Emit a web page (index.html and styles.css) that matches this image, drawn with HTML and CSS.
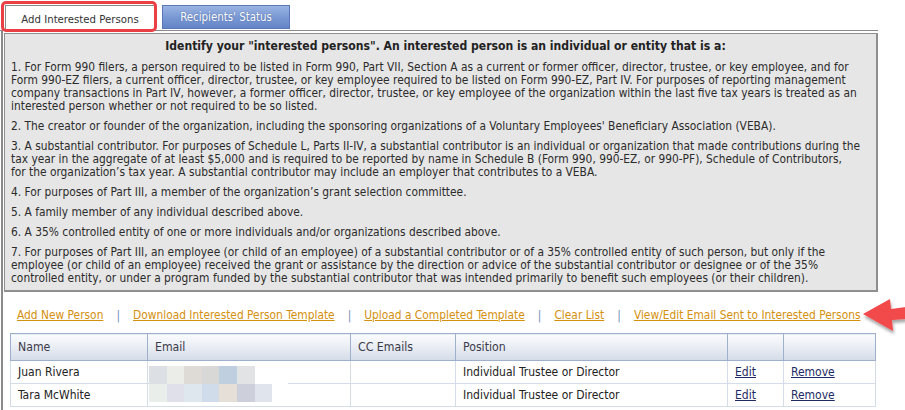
FILE: index.html
```html
<!DOCTYPE html>
<html>
<head>
<meta charset="utf-8">
<link rel="stylesheet" href="styles.css">
</head>
<body>
<div class="page">
  <div class="tabs">
    <div class="tab active">Add Interested Persons</div>
    <div class="tab blue">Recipients' Status</div>
    <div class="highlight"></div>
  </div>
  <div class="content">
    <div class="panel">
      <div class="title">Identify your "interested persons". An interested person is an individual or entity that is a:</div>
      <p>1. For Form 990 filers, a person required to be listed in Form 990, Part VII, Section A as a current or former officer, director, trustee, or key employee, and for<br>Form 990-EZ filers, a current officer, director, trustee, or key employee required to be listed on Form 990-EZ, Part IV. For purposes of reporting management<br>company transactions in Part IV, however, a former officer, director, trustee, or key employee of the organization within the last five tax years is treated as an<br>interested person whether or not required to be so listed.</p>
      <p>2. The creator or founder of the organization, including the sponsoring organizations of a Voluntary Employees' Beneficiary Association (VEBA).</p>
      <p>3. A substantial contributor. For purposes of Schedule L, Parts II-IV, a substantial contributor is an individual or organization that made contributions during the<br>tax year in the aggregate of at least $5,000 and is required to be reported by name in Schedule B (Form 990, 990-EZ, or 990-PF), Schedule of Contributors,<br>for the organization’s tax year. A substantial contributor may include an employer that contributes to a VEBA.</p>
      <p>4. For purposes of Part III, a member of the organization’s grant selection committee.</p>
      <p>5. A family member of any individual described above.</p>
      <p>6. A 35% controlled entity of one or more individuals and/or organizations described above.</p>
      <p class="last">7. For purposes of Part III, an employee (or child of an employee) of a substantial contributor or of a 35% controlled entity of such person, but only if the<br>employee (or child of an employee) received the grant or assistance by the direction or advice of the substantial contributor or designee or of the 35%<br>controlled entity, or under a program funded by the substantial contributor that was intended primarily to benefit such employees (or their children).</p>
    </div>
    <div class="links">
      <a href="#">Add New Person</a><span class="sep">|</span>
      <a href="#">Download Interested Person Template</a><span class="sep">|</span>
      <a href="#">Upload a Completed Template</a><span class="sep">|</span>
      <a href="#">Clear List</a><span class="sep">|</span>
      <a href="#">View/Edit Email Sent to Interested Persons</a>
    </div>
    <table class="grid">
      <colgroup>
        <col class="c-name"><col class="c-email"><col class="c-cc"><col class="c-pos"><col class="c-edit"><col class="c-rem">
      </colgroup>
      <thead>
        <tr><th>Name</th><th>Email</th><th>CC Emails</th><th>Position</th><th></th><th></th></tr>
      </thead>
      <tbody>
        <tr>
          <td>Juan Rivera</td>
          <td class="email"><div class="mosaic m1"><i class="b1"></i><i class="b2"></i><i class="b3"></i><i class="b4"></i><i class="b5"></i><i class="b6"></i></div></td>
          <td></td>
          <td>Individual Trustee or Director</td>
          <td><a class="act" href="#">Edit</a></td>
          <td><a class="act" href="#">Remove</a></td>
        </tr>
        <tr>
          <td>Tara McWhite</td>
          <td class="email"><div class="mosaic m2"><i class="b1"></i><i class="b2"></i><i class="b3"></i><i class="b4"></i><i class="b5"></i><i class="b6"></i><i class="b7"></i></div></td>
          <td></td>
          <td>Individual Trustee or Director</td>
          <td><a class="act" href="#">Edit</a></td>
          <td><a class="act" href="#">Remove</a></td>
        </tr>
      </tbody>
    </table>
  </div>
  <svg class="arrow" width="46" height="44" viewBox="0 0 46 44">
    <defs>
      <filter id="sh" x="-20%" y="-20%" width="150%" height="160%">
        <feDropShadow dx="1" dy="3" stdDeviation="1.6" flood-color="#000" flood-opacity="0.35"/>
      </filter>
    </defs>
    <path d="M3 18 L30 3 L31 13 L46 11 L46 23 L32 24 L33 35 Z" fill="#f2484b" filter="url(#sh)"/>
  </svg>
</div>
</body>
</html>
```
FILE: styles.css
```css
html, body {
  margin: 0;
  padding: 0;
  background: #ffffff;
}
body {
  font-family: "DejaVu Sans Condensed", "DejaVu Sans", sans-serif;
  font-stretch: condensed;
  font-size: 11.85px;
  color: #2b2b2b;
}
.page {
  position: relative;
  width: 905px;
  height: 410px;
  overflow: hidden;
}
.tabs {
  position: relative;
  display: flex;
  align-items: flex-end;
  gap: 7px;
  height: 30px;
  padding-left: 5px;
  width: 873px;
  border-bottom: 1px solid #8a8a8a;
  box-sizing: content-box;
}
.tab {
  box-sizing: border-box;
  display: flex;
  align-items: center;
  justify-content: center;
  font-size: 11.3px;
}
.tab.active {
  width: 150px;
  height: 26px;
  margin-bottom: -1px;
  background: #ffffff;
  border: 1px solid #8a8a8a;
  border-bottom: none;
  color: #333;
  padding-top: 1px;
}
.tab.blue {
  width: 128px;
  height: 24px;
  margin-bottom: 1px;
  background: linear-gradient(#9ab4e2, #7796d2 55%, #6585c8);
  border: 1px solid #5a78b8;
  color: #ffffff;
  text-shadow: 0 0 1px #3a5590;
  font-size: 11.4px;
}
.highlight {
  position: absolute;
  left: 1px;
  top: 1px;
  width: 156px;
  height: 31px;
  box-sizing: border-box;
  border: 3px solid #ea3f45;
  border-radius: 5px;
}
.content {
  margin-left: 1px;
  width: 877px;
  height: 380px;
  border-left: 2px solid #8a8a8a;
  padding-top: 2px;
  padding-left: 1px;
  box-sizing: border-box;
}
.panel {
  width: 874px;
  box-sizing: border-box;
  background: #e6e6e6;
  border: 1px solid #8f8f8f;
  border-width: 1px 2px 2px 1px;
  padding: 6px 6px 2px 6px;
  line-height: 13px;
}
.title {
  font-weight: bold;
  text-align: center;
  font-size: 12.1px;
  margin-bottom: 8px;
  padding-left: 10px;
  color: #222;
}
.panel p {
  margin: 0 0 7px 0;
  white-space: nowrap;
}
.panel p.last {
  margin-bottom: 3px;
}
.links {
  display: flex;
  align-items: center;
  padding-left: 13px;
  margin-top: 16px;
  height: 14px;
}
.links a {
  color: #d4900e;
  text-decoration: underline;
}
.links .sep {
  color: #6f8fbb;
  margin: 0 13px;
}
.grid {
  margin-top: 11px;
  margin-left: 6px;
  border-collapse: collapse;
  table-layout: fixed;
  width: 865px;
  border: 1px solid #9eb0cc;
}
.c-name { width: 137px; }
.c-email { width: 203px; }
.c-cc { width: 105px; }
.c-pos { width: 272px; }
.c-edit { width: 56px; }
.c-rem { width: 92px; }
.grid th {
  height: 26px;
  text-align: left;
  font-weight: normal;
  color: #3a3a4a;
  padding: 0 0 0 7px;
  background: linear-gradient(#fafbfd, #e9edf3 50%, #d4dce8);
  border: 1px solid #9eb0cc;
  font-size: 12.2px;
}
.grid td {
  height: 22px;
  padding: 0 0 0 7px;
  border: 1px solid #d4dce8;
  color: #222;
  font-size: 12px;
}
.grid td.email {
  padding: 0 0 0 1px;
  position: relative;
}
.act {
  color: #1d2a63;
  text-decoration: underline;
}
.mosaic {
  display: flex;
  position: absolute;
  left: 1px;
}
.mosaic i {
  display: block;
  width: 17.6px;
  height: 18px;
}
.m1 { top: 5px; }
.m1 .b1 { background: #dcdfe4; }
.m1 .b2 { background: #ebede9; }
.m1 .b3 { background: #dedbd7; }
.m1 .b4 { background: #d8d8d7; }
.m1 .b5 { background: #c0cfe0; }
.m1 .b6 { background: #e2e3e5; }
.m1::after {
  content: "";
  display: block;
  width: 33px;
  height: 20px;
  background: #ffffff;
}
.m2 { top: 0; }
.m2 .b1 { background: #e9eeea; }
.m2 .b2 { background: #dfe0e9; }
.m2 .b3 { background: #dfe7ee; }
.m2 .b4 { background: #d0dce9; }
.m2 .b5 { background: #e6dfd8; }
.m2 .b6 { background: #cdd0db; }
.m2 .b7 { background: #dfe4ed; }
.arrow {
  position: absolute;
  left: 860px;
  top: 296px;
}
```
